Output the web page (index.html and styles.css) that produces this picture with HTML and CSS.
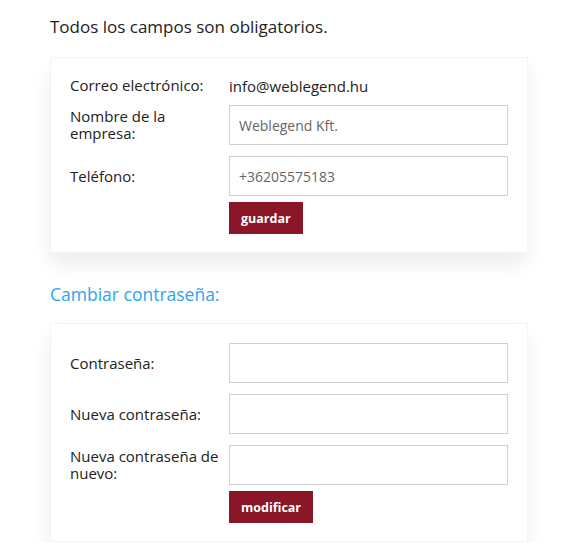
FILE: index.html
```html
<!DOCTYPE html>
<html lang="es">
<head>
<meta charset="utf-8">
<link rel="stylesheet" href="styles.css">
</head>
<body>
<div class="page">
  <p class="note">Todos los campos son obligatorios.</p>
  <div class="card">
    <div class="row row-static">
      <span class="label">Correo electrónico:</span>
      <span class="value">info@weblegend.hu</span>
    </div>
    <div class="row">
      <label class="label">Nombre de la empresa:</label>
      <input class="field" type="text" value="Weblegend Kft.">
    </div>
    <div class="row">
      <label class="label">Teléfono:</label>
      <input class="field" type="text" value="+36205575183">
    </div>
    <div class="actions">
      <button class="btn" type="button">guardar</button>
    </div>
  </div>
  <h3 class="section-title">Cambiar contraseña:</h3>
  <div class="card">
    <div class="row">
      <label class="label">Contraseña:</label>
      <input class="field" type="password">
    </div>
    <div class="row">
      <label class="label">Nueva contraseña:</label>
      <input class="field" type="password">
    </div>
    <div class="row">
      <label class="label">Nueva contraseña de nuevo:</label>
      <input class="field" type="password">
    </div>
    <div class="actions">
      <button class="btn" type="button">modificar</button>
    </div>
  </div>
</div>
</body>
</html>
```
FILE: styles.css
```css
html, body {
  margin: 0;
  padding: 0;
  background: #ffffff;
}
body {
  font-family: "Open Sans", "Liberation Sans", sans-serif;
  color: #222222;
}
.page {
  padding: 16px 0 0 50px;
  width: 478px;
}
.note {
  margin: 0;
  font-size: 17px;
  line-height: 22px;
  color: #222;
}
.card {
  margin-top: 19px;
  background: #fff;
  border: 1px solid #f4f4f4;
  box-shadow: 0 12px 18px rgba(0, 0, 0, 0.07);
  padding: 19px 19px 18px 19px;
}
.row {
  display: flex;
  align-items: center;
}
.row + .row {
  margin-top: 11px;
}
.label {
  width: 159px;
  flex: none;
  font-size: 15px;
  line-height: 17px;
  color: #222;
  padding-right: 4px;
  box-sizing: border-box;
}
.row-static {
  height: 17px;
}
.value {
  font-size: 15px;
  color: #222;
}
.field {
  width: 280px;
  height: 40px;
  box-sizing: border-box;
  border: 1px solid #cfcfcf;
  padding: 0 9px;
  font-family: inherit;
  font-size: 14px;
  color: #666;
  outline: none;
  margin: 0;
}
.actions {
  margin-top: 6px;
  padding-left: 159px;
}
.btn {
  height: 32px;
  padding: 0 12px;
  background: #8a1627;
  border: none;
  color: #fff;
  font-family: inherit;
  font-weight: 700;
  font-size: 12.5px;
  margin: 0;
}
.section-title {
  margin: 30px 0 0 0;
  font-weight: 400;
  font-size: 17.5px;
  line-height: 22px;
  color: #2ea3f2;
}
.section-title + .card {
  margin-top: 18px;
}
```
